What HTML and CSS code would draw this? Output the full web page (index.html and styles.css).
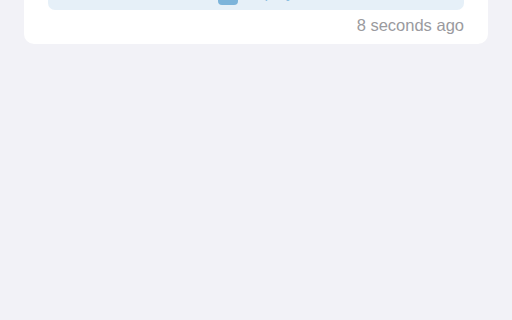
FILE: index.html
```html
<!DOCTYPE html>
<html>
<head>
<meta charset="utf-8">
<link rel="stylesheet" href="styles.css">
</head>
<body>
<div class="page">
  <div class="card">
    <div class="attachment">
      <span class="thumb"></span>
      <span class="label">Replay</span>
    </div>
    <div class="time">8 seconds ago</div>
  </div>
</div>
</body>
</html>
```

FILE: styles.css
```css
html, body {
  margin: 0;
  padding: 0;
  background: #f2f2f7;
  font-family: "Liberation Sans", Arial, sans-serif;
}
.page {
  padding: 0 24px;
}
.card {
  margin-top: -38px;
  background: #ffffff;
  border-radius: 10px;
  padding: 0 24px 9px;
}
.attachment {
  height: 48px;
  box-sizing: border-box;
  padding-bottom: 5px;
  background: #e6f0f8;
  border-radius: 7px;
  display: flex;
  align-items: flex-end;
  justify-content: center;
  gap: 6px;
}
.thumb {
  width: 20px;
  height: 20px;
  border-radius: 4px;
  background: #7db4da;
}
.label {
  font-size: 16px;
  line-height: 20px;
  color: #8fc0e2;
  margin-bottom: 2px;
}
.time {
  margin-top: 5px;
  text-align: right;
  font-size: 16.5px;
  line-height: 20px;
  color: #9a9a9e;
}
```
